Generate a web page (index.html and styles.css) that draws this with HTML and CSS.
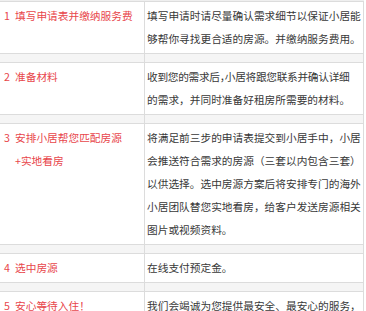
FILE: index.html
```html
<!DOCTYPE html>
<html lang="zh-CN">
<head>
<meta charset="utf-8">
<title>租房流程</title>
<link rel="stylesheet" href="styles.css">
</head>
<body>
<div class="steps">
  <div class="row">
    <div class="step"><span class="num">1</span><span class="title">填写申请表并缴纳服务费</span></div>
    <div class="desc">填写申请时请尽量确认需求细节以保证小居能够帮你寻找更合适的房源。并缴纳服务费用。</div>
  </div>
  <div class="row gap"><div class="step"></div><div class="desc"></div></div>
  <div class="row">
    <div class="step"><span class="num">2</span><span class="title">准备材料</span></div>
    <div class="desc"><span class="fit">收到您的需求后<span class="halt">，</span>小居将跟您联系并确认详细</span>的需求，并同时准备好租房所需要的材料。</div>
  </div>
  <div class="row gap"><div class="step"></div><div class="desc"></div></div>
  <div class="row">
    <div class="step"><span class="num">3</span><span class="title">安排小居帮您匹配房源<span class="nowrap">+实地看房</span></span></div>
    <div class="desc">将满足前三步的申请表提交到小居手中，小居会推送符合需求的房源（三套以内包含三套）以供选择。选中房源方案后将安排专门的海外小居团队替您实地看房，给客户发送房源相关图片或视频资料。</div>
  </div>
  <div class="row gap"><div class="step"></div><div class="desc"></div></div>
  <div class="row">
    <div class="step"><span class="num">4</span><span class="title">选中房源</span></div>
    <div class="desc">在线支付预定金。</div>
  </div>
  <div class="row gap"><div class="step"></div><div class="desc"></div></div>
  <div class="row last">
    <div class="step"><span class="num">5</span><span class="title">安心等待入住！</span></div>
    <div class="desc">我们会竭诚为您提供最安全、最安心的服务，</div>
  </div>
</div>
</body>
</html>
```
FILE: styles.css
```css
html, body {
  margin: 0;
  padding: 0;
  background: #ffffff;
  overflow: hidden;
}

.steps {
  width: 364px;
  border-top: 1px solid #efefef;
  font-family: "Noto Sans CJK SC", "Noto Sans", sans-serif;
  font-size: 10.7px;
  line-height: 23px;
}

.row {
  display: grid;
  grid-template-columns: 144px 220px;
  border-top: 1px solid #dcdcdc;
  background: #ffffff;
}

.row.last {
  border-bottom: 1px solid #dcdcdc;
}

.step {
  display: flex;
  padding: 2px 0 3px 4px;
  color: #e8464b;
}

.num {
  flex: none;
  width: 11px;
}

.title {
  flex: 1;
}

.nowrap {
  white-space: nowrap;
}

.desc {
  border-left: 1px solid #dcdcdc;
  border-right: 1px solid #dcdcdc;
  padding: 2px 1.5px 3px 2px;
  color: #383838;
  word-break: break-all;
}

.fit {
  display: block;
  white-space: nowrap;
  letter-spacing: -0.3px;
}

.halt {
  font-feature-settings: "halt";
}

.row.gap {
  height: 8px;
  background: #f5f5f5;
}

.row.gap .step,
.row.gap .desc {
  padding: 0;
}
```
